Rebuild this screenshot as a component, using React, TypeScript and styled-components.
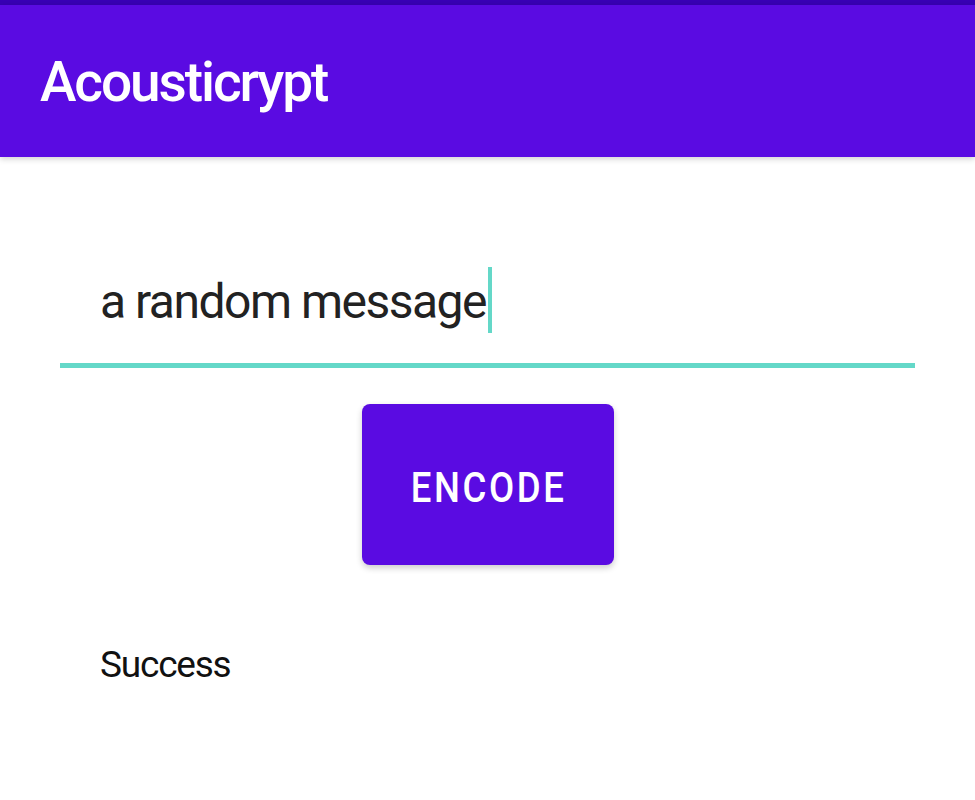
import React from "react";
import styled, { createGlobalStyle } from "styled-components";

const Global = createGlobalStyle`
  html, body { margin: 0; padding: 0; background: #ffffff; }
  body { font-family: Roboto, "Noto Sans", sans-serif; }
`;

const Page = styled.div`
  width: 975px;
  height: 800px;
  display: flex;
  flex-direction: column;
  background: #ffffff;
  overflow: hidden;
`;

const StatusBar = styled.div`
  height: 5px;
  background: #3800b4;
`;

const AppBar = styled.header`
  height: 152px;
  background: #5a0be2;
  display: flex;
  align-items: center;
  padding-left: 40px;
  box-shadow: 0 2px 6px rgba(0, 0, 0, 0.18);
  position: relative;
  z-index: 1;
`;

const Title = styled.h1`
  margin: 0;
  color: #ffffff;
  font-family: Roboto, sans-serif;
  font-weight: 500;
  font-size: 55px;
  letter-spacing: -2.1px;
  line-height: 1;
  margin-top: 2px;
`;

const Content = styled.main`
  display: flex;
  flex-direction: column;
  padding: 0 60px;
`;

const Field = styled.div`
  margin-top: 110px;
  display: flex;
  flex-direction: column;
`;

const InputRow = styled.div`
  display: flex;
  align-items: center;
  padding-left: 40px;
  height: 66px;
`;

const InputText = styled.span`
  font-family: Roboto, sans-serif;
  font-size: 48px;
  letter-spacing: -1.5px;
  color: #222222;
  line-height: 1;
  margin-top: 4px;
`;

const Caret = styled.span`
  display: inline-block;
  width: 4px;
  height: 66px;
  margin-left: 2px;
  background: #64d8c8;
`;

const Underline = styled.div`
  margin-top: 30px;
  height: 5px;
  background: #64d8c8;
`;

const ButtonRow = styled.div`
  display: flex;
  justify-content: center;
  margin-top: 36px;
`;

const Button = styled.button`
  width: 252px;
  height: 161px;
  border: none;
  border-radius: 8px;
  background: #5a0be2;
  color: #ffffff;
  box-shadow: 0 3px 6px rgba(0, 0, 0, 0.2);
  padding: 6px 0 0 0;
  display: flex;
  align-items: center;
  justify-content: center;
`;

const ButtonLabel = styled.span`
  display: inline-block;
  font-family: Roboto, sans-serif;
  font-weight: 500;
  font-size: 42px;
  letter-spacing: 3px;
  margin-right: -3px;
  line-height: 1;
  transform: scaleX(0.87);
`;

const Status = styled.p`
  margin: 81px 0 0 40px;
  font-family: Roboto, sans-serif;
  font-size: 37px;
  letter-spacing: -1.2px;
  color: #111111;
  line-height: 1;
`;

export default function App() {
  return (
    <Page>
      <Global />
      <StatusBar />
      <AppBar>
        <Title>Acousticrypt</Title>
      </AppBar>
      <Content>
        <Field>
          <InputRow>
            <InputText>a random message</InputText>
            <Caret />
          </InputRow>
          <Underline />
        </Field>
        <ButtonRow>
          <Button>
            <ButtonLabel>ENCODE</ButtonLabel>
          </Button>
        </ButtonRow>
        <Status>Success</Status>
      </Content>
    </Page>
  );
}
